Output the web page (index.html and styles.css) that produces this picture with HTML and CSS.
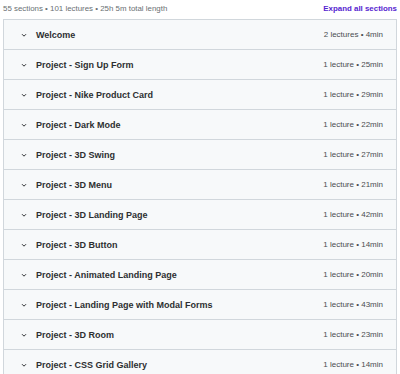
FILE: index.html
```html
<!DOCTYPE html>
<html lang="en">
<head>
    <meta charset="UTF-8">
    <meta name="viewport" content="width=device-width, initial-scale=1.0">
    <title>Course content</title>
    <link rel="stylesheet" href="styles.css">
</head>
<body>

<div class="content">
    <div class="summary">
        <span>55 sections • 101 lectures • 25h 5m total length</span>
        <button class="expand">Expand all sections</button>
    </div>
    <div class="sections">
        <div class="section">
            <span class="chev"><svg width="8" height="8" viewBox="0 0 8 8"><path d="M2 3.2 L4 5.2 L6 3.2" fill="none" stroke="#2d2f31" stroke-width="1"/></svg></span>
            <span class="title">Welcome</span>
            <span class="meta">2 lectures • 4min</span>
        </div>
        <div class="section">
            <span class="chev"><svg width="8" height="8" viewBox="0 0 8 8"><path d="M2 3.2 L4 5.2 L6 3.2" fill="none" stroke="#2d2f31" stroke-width="1"/></svg></span>
            <span class="title">Project - Sign Up Form</span>
            <span class="meta">1 lecture • 25min</span>
        </div>
        <div class="section">
            <span class="chev"><svg width="8" height="8" viewBox="0 0 8 8"><path d="M2 3.2 L4 5.2 L6 3.2" fill="none" stroke="#2d2f31" stroke-width="1"/></svg></span>
            <span class="title">Project - Nike Product Card</span>
            <span class="meta">1 lecture • 29min</span>
        </div>
        <div class="section">
            <span class="chev"><svg width="8" height="8" viewBox="0 0 8 8"><path d="M2 3.2 L4 5.2 L6 3.2" fill="none" stroke="#2d2f31" stroke-width="1"/></svg></span>
            <span class="title">Project - Dark Mode</span>
            <span class="meta">1 lecture • 22min</span>
        </div>
        <div class="section">
            <span class="chev"><svg width="8" height="8" viewBox="0 0 8 8"><path d="M2 3.2 L4 5.2 L6 3.2" fill="none" stroke="#2d2f31" stroke-width="1"/></svg></span>
            <span class="title">Project - 3D Swing</span>
            <span class="meta">1 lecture • 27min</span>
        </div>
        <div class="section">
            <span class="chev"><svg width="8" height="8" viewBox="0 0 8 8"><path d="M2 3.2 L4 5.2 L6 3.2" fill="none" stroke="#2d2f31" stroke-width="1"/></svg></span>
            <span class="title">Project - 3D Menu</span>
            <span class="meta">1 lecture • 21min</span>
        </div>
        <div class="section">
            <span class="chev"><svg width="8" height="8" viewBox="0 0 8 8"><path d="M2 3.2 L4 5.2 L6 3.2" fill="none" stroke="#2d2f31" stroke-width="1"/></svg></span>
            <span class="title">Project - 3D Landing Page</span>
            <span class="meta">1 lecture • 42min</span>
        </div>
        <div class="section">
            <span class="chev"><svg width="8" height="8" viewBox="0 0 8 8"><path d="M2 3.2 L4 5.2 L6 3.2" fill="none" stroke="#2d2f31" stroke-width="1"/></svg></span>
            <span class="title">Project - 3D Button</span>
            <span class="meta">1 lecture • 14min</span>
        </div>
        <div class="section">
            <span class="chev"><svg width="8" height="8" viewBox="0 0 8 8"><path d="M2 3.2 L4 5.2 L6 3.2" fill="none" stroke="#2d2f31" stroke-width="1"/></svg></span>
            <span class="title">Project - Animated Landing Page</span>
            <span class="meta">1 lecture • 20min</span>
        </div>
        <div class="section">
            <span class="chev"><svg width="8" height="8" viewBox="0 0 8 8"><path d="M2 3.2 L4 5.2 L6 3.2" fill="none" stroke="#2d2f31" stroke-width="1"/></svg></span>
            <span class="title">Project - Landing Page with Modal Forms</span>
            <span class="meta">1 lecture • 43min</span>
        </div>
        <div class="section">
            <span class="chev"><svg width="8" height="8" viewBox="0 0 8 8"><path d="M2 3.2 L4 5.2 L6 3.2" fill="none" stroke="#2d2f31" stroke-width="1"/></svg></span>
            <span class="title">Project - 3D Room</span>
            <span class="meta">1 lecture • 23min</span>
        </div>
        <div class="section">
            <span class="chev"><svg width="8" height="8" viewBox="0 0 8 8"><path d="M2 3.2 L4 5.2 L6 3.2" fill="none" stroke="#2d2f31" stroke-width="1"/></svg></span>
            <span class="title">Project - CSS Grid Gallery</span>
            <span class="meta">1 lecture • 14min</span>
        </div>
    </div>
</div>

</body>
</html>
```

FILE: styles.css
```css
body {
    margin: 0;
    font-family: "Liberation Sans", Arial, sans-serif;
    color: #2d2f31;
    background: #fff;
    overflow: hidden;
}
.content {
    padding: 0 3px 0 3px;
}
.summary {
    display: flex;
    justify-content: space-between;
    align-items: center;
    height: 17px;
    margin-bottom: 2px;
    font-size: 7.9px;
    color: #6a6f73;
}
.expand {
    border: none;
    background: none;
    padding: 0;
    font-family: inherit;
    font-size: 7.9px;
    font-weight: bold;
    color: #5624d0;
    cursor: pointer;
}
.sections {
    border: 1px solid #d1d7dc;
}
.section {
    display: flex;
    align-items: center;
    height: 29px;
    padding: 0 13px 0 16px;
    background: #f7f9fa;
    border-bottom: 1px solid #d1d7dc;
}
.chev {
    display: flex;
    width: 16px;
}
.title {
    flex: 1;
    font-size: 9px;
    font-weight: bold;
}
.meta {
    font-size: 8px;
    color: #4a4d50;
}
```
